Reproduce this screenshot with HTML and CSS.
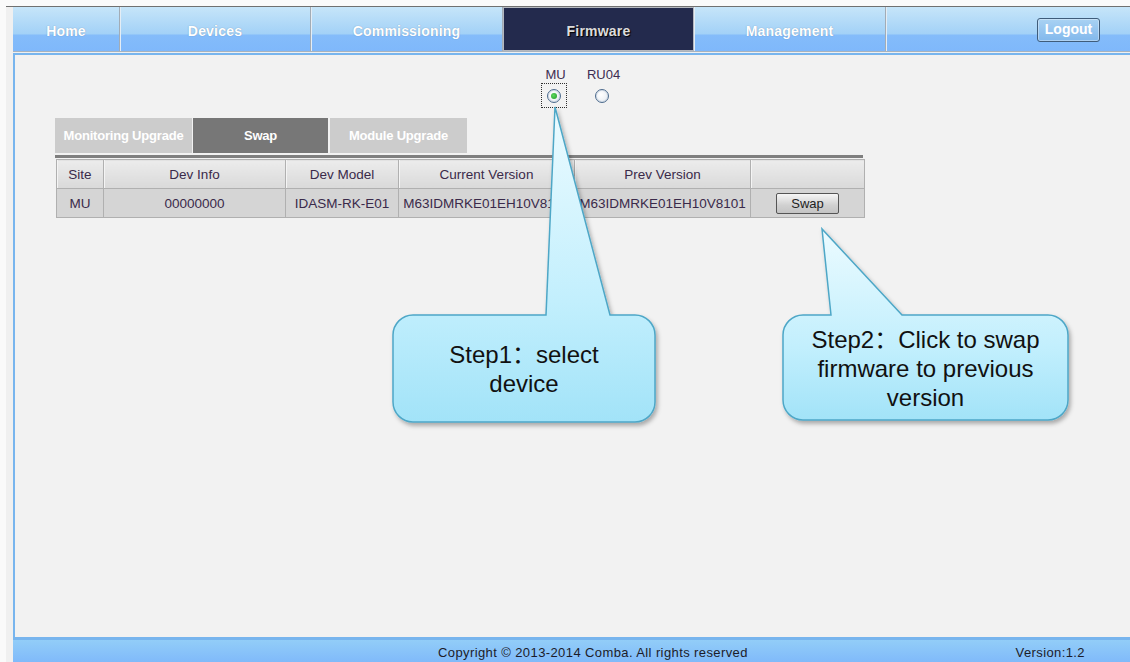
FILE: index.html
```html
<!DOCTYPE html>
<html>

<head>
    <title>Firmware - Swap</title>
    <link rel="stylesheet" href="styles.css">
</head>

<body>
    <div class="frame">
        <div class="nav">
            <a class="nav-item w-home">Home</a>
            <a class="nav-item w-dev">Devices</a>
            <a class="nav-item w-com">Commissioning</a>
            <a class="nav-item w-fw active">Firmware</a>
            <a class="nav-item w-mgmt">Management</a>
            <div class="nav-rest">
                <button class="logout">Logout</button>
            </div>
        </div>

        <div class="content">
            <div class="devices">
                <label class="dev dev-mu">
                    <span class="dev-name">MU</span>
                    <span class="radio-box focused"><span class="radio checked"></span></span>
                </label>
                <label class="dev dev-ru">
                    <span class="dev-name">RU04</span>
                    <span class="radio-box"><span class="radio"></span></span>
                </label>
            </div>

            <div class="tabs">
                <div class="tab">Monitoring Upgrade</div>
                <div class="tab current">Swap</div>
                <div class="tab">Module Upgrade</div>
            </div>
            <div class="tab-line"></div>

            <table class="fw-table">
                <colgroup>
                    <col class="c-site">
                    <col class="c-info">
                    <col class="c-model">
                    <col class="c-ver">
                    <col class="c-ver">
                    <col class="c-act">
                </colgroup>
                <thead>
                    <tr>
                        <th>Site</th>
                        <th>Dev Info</th>
                        <th>Dev Model</th>
                        <th>Current Version</th>
                        <th>Prev Version</th>
                        <th></th>
                    </tr>
                </thead>
                <tbody>
                    <tr>
                        <td>MU</td>
                        <td>00000000</td>
                        <td>IDASM-RK-E01</td>
                        <td>M63IDMRKE01EH10V8101</td>
                        <td>M63IDMRKE01EH10V8101</td>
                        <td><button class="swap-btn">Swap</button></td>
                    </tr>
                </tbody>
            </table>
        </div>

        <div class="footer">
            <span class="copy">Copyright © 2013-2014 Comba. All rights reserved</span>
            <span class="version">Version:1.2</span>
        </div>
    </div>

    <!-- callouts drawn over the page -->
    <svg class="callouts" width="1130" height="662" viewBox="0 0 1130 662">
        <defs>
            <linearGradient id="bubble" x1="0" y1="0" x2="0" y2="1">
                <stop offset="0" stop-color="#ecfbff" />
                <stop offset="0.62" stop-color="#c2effd" />
                <stop offset="1" stop-color="#a2e3f8" />
            </linearGradient>
            <filter id="shadow" x="-10%" y="-10%" width="130%" height="130%">
                <feDropShadow dx="2" dy="3" stdDeviation="2" flood-color="#000" flood-opacity="0.3" />
            </filter>
        </defs>
        <path class="bubble"
            d="M413 315 L546 315 L555 107 L610 315 L635 315 A20 20 0 0 1 655 335 L655 402 A20 20 0 0 1 635 422 L413 422 A20 20 0 0 1 393 402 L393 335 A20 20 0 0 1 413 315 Z" />
        <path class="bubble"
            d="M803 315 L831 315 L822 229 L902 315 L1048 315 A20 20 0 0 1 1068 335 L1068 400 A20 20 0 0 1 1048 420 L803 420 A20 20 0 0 1 783 400 L783 335 A20 20 0 0 1 803 315 Z" />
    </svg>
    <div class="callout-text step1">Step1：select<br>device</div>
    <div class="callout-text step2">Step2：Click to swap<br>firmware to previous<br>version</div>
</body>

</html>
```

FILE: styles.css
```css
body {
    margin: 0;
    background: #fafafa;
    font-family: 'Liberation Sans', Arial, sans-serif;
    overflow: hidden;
}

.frame {
    margin: 6px 0 0 6px;
    padding-left: 7px;
    border-top: 1px solid #707070;
    background: #f0f0f0;
    height: 655px;
}

/* top menu */
.nav {
    display: flex;
    height: 44px;
    border-bottom: 1px solid #a9b3bd;
    background: linear-gradient(#c6e5f9 0%, #a2d1f7 62%, #84bcfa 63%, #7fb8fb 100%);
}

.nav-item {
    box-sizing: border-box;
    display: flex;
    align-items: center;
    justify-content: center;
    padding-top: 4px;
    color: #ffffff;
    font-weight: bold;
    font-size: 14px;
    letter-spacing: 0.2px;
    text-shadow: 0 0 1px rgba(40, 70, 110, 0.5);
    border-right: 1px solid #a2acb6;
    box-shadow: 1px 0 0 #e4edf5;
}

.w-home { width: 107px; }
.w-dev { width: 191px; }
.w-com { width: 192px; }
.w-fw { width: 191px; }
.w-mgmt { width: 192px; }

.nav-item.active {
    background: #232a4d;
    border: 1px solid #b4b8c0;
    color: #dcdcdc;
    text-shadow: 1px 1px 1px #000;
}

.nav-rest {
    flex: 1;
    display: flex;
    justify-content: flex-end;
    align-items: center;
    padding: 2px 30px 0 0;
}

.logout {
    width: 63px;
    height: 24px;
    padding: 0 0 2px;
    border: 1px solid #3f5c7a;
    border-radius: 3px;
    background: linear-gradient(#a9d2f3, #82b8ec);
    box-shadow: inset 0 0 0 1px rgba(255, 255, 255, 0.35);
    color: #ffffff;
    font-family: 'Liberation Sans', Arial, sans-serif;
    font-weight: bold;
    font-size: 14px;
}

/* main area */
.content {
    box-sizing: border-box;
    margin-top: 1px;
    height: 587px;
    border: 2px solid #78b5ee;
    border-right: none;
    border-bottom-width: 3px;
    background: #f2f2f2;
    padding-top: 12px;
}

.devices {
    display: flex;
    gap: 17px;
    margin-left: 526px;
    color: #3d2d52;
    font-size: 13px;
}

.dev {
    display: flex;
    flex-direction: column;
    align-items: center;
}

.dev-name {
    line-height: 15px;
    padding-left: 3px;
}

.dev-ru {
    width: 36px;
}

.radio-box {
    box-sizing: border-box;
    display: flex;
    align-items: center;
    justify-content: center;
    width: 26px;
    height: 25px;
    margin-top: 1px;
}

.radio-box.focused {
    border: 1px dotted #303030;
}

.radio {
    position: relative;
    box-sizing: border-box;
    width: 14px;
    height: 14px;
    border-radius: 50%;
    border: 1px solid #4d6b8d;
    background: radial-gradient(circle at 40% 40%, #ffffff, #e2e8ee);
    box-shadow: inset 0 0 0 1px #d6dee8;
}

.radio.checked::after {
    content: "";
    position: absolute;
    left: 3px;
    top: 3px;
    width: 6px;
    height: 6px;
    border-radius: 50%;
    background: radial-gradient(circle at 40% 40%, #5ed85e, #1f9a28);
}

/* sub tabs */
.tabs {
    display: flex;
    margin: 10px 0 0 40px;
    height: 35px;
}

.tab {
    width: 137px;
    display: flex;
    align-items: center;
    justify-content: center;
    background: #cccccc;
    color: #ffffff;
    font-weight: bold;
    font-size: 13px;
    letter-spacing: -0.2px;
    margin-right: 1px;
}

.tab.current {
    width: 135px;
    background: #777777;
    margin-right: 2px;
}

.tab-line {
    width: 808px;
    height: 3px;
    margin: 2px 0 1px 40px;
    background: #7f7f7f;
}

/* device table */
.fw-table {
    width: 808px;
    margin-left: 41px;
    border-collapse: collapse;
    table-layout: fixed;
    font-size: 13.5px;
    color: #3a2a4a;
    border: 1px solid #a8a8a8;
}

.c-site { width: 47px; }
.c-info { width: 182px; }
.c-model { width: 113px; }
.c-ver { width: 176px; }
.c-act { width: 114px; }

.fw-table th,
.fw-table td {
    border: 1px solid #b0b0b0;
    padding: 0;
    text-align: center;
    white-space: nowrap;
    overflow: hidden;
}

.fw-table th {
    height: 28px;
    font-weight: normal;
    background: linear-gradient(#ececec, #d9d9d9);
    box-shadow: inset 1px 0 0 #f4f4f4;
}

.fw-table td {
    height: 28px;
    background: #d5d5d5;
}

.swap-btn {
    width: 63px;
    height: 21px;
    padding: 0;
    border: 1px solid #555555;
    border-radius: 2px;
    background: linear-gradient(#f6f6f6, #d0d0d0 60%, #c4c4c4);
    font-family: 'Liberation Sans', Arial, sans-serif;
    font-size: 13px;
    color: #222222;
}

/* footer */
.footer {
    display: flex;
    align-items: center;
    height: 22px;
    padding-top: 2px;
    box-sizing: border-box;
    background: linear-gradient(#92cdf8, #80bafa);
    font-size: 13px;
    letter-spacing: 0.4px;
    color: #1c1c2a;
}

.copy {
    margin-left: 425px;
}

.version {
    margin-left: auto;
    margin-right: 45px;
}

/* callouts */
.callouts {
    position: absolute;
    left: 0;
    top: 0;
    pointer-events: none;
}

.bubble {
    fill: url(#bubble);
    stroke: #4ea7c7;
    stroke-width: 1.5;
    filter: url(#shadow);
}

.callout-text {
    position: absolute;
    display: flex;
    align-items: center;
    justify-content: center;
    text-align: center;
    font-family: 'Liberation Sans', Arial, 'Noto Sans CJK SC', sans-serif;
    font-size: 24px;
    line-height: 29px;
    color: #111111;
}

.step1 {
    left: 393px;
    top: 316px;
    width: 262px;
    height: 106px;
}

.step2 {
    left: 783px;
    top: 316px;
    width: 285px;
    height: 104px;
}
```
